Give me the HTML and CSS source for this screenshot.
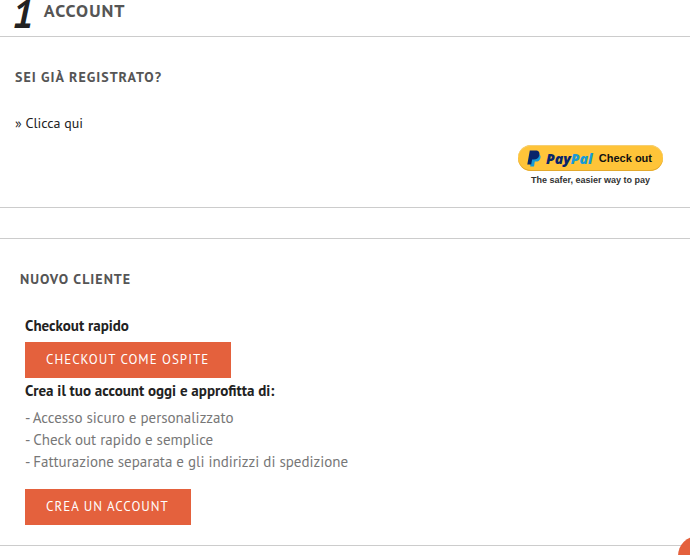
FILE: index.html
```html
<!DOCTYPE html>
<html lang="it">
<head>
<meta charset="utf-8">
<title>Account</title>
<link rel="stylesheet" href="styles.css">
</head>
<body>
<main>
  <header class="step">
    <span class="step-number">1</span>
    <h1 class="step-title">Account</h1>
  </header>

  <section class="panel login">
    <h2 class="panel-title">Sei già registrato?</h2>
    <a class="login-link" href="#">» Clicca qui</a>
    <div class="paypal">
      <button class="paypal-button" type="button" aria-label="PayPal Check out">
        <svg class="paypal-mark" viewBox="0 0 14 17" aria-hidden="true">
          <path fill="#169bd7" d="M4.5 4.5H12.6C13.8 5.6 13.8 7.2 13.2 8.8C12.5 10.8 11 11.6 9 11.6H7.8L7 16.5H3.2Z"/>
          <path fill="#08256b" d="M2.8 .5H8.5C11.7 .5 13 2.5 12.3 5.2C11.6 8.3 9.6 9.4 6.8 9.4H5.1L4.2 14.4H.3Z"/>
        </svg>
        <span class="paypal-name">Pay<span class="paypal-pal">Pal</span></span>
        <span class="paypal-label">Check out</span>
      </button>
      <p class="paypal-note">The safer, easier way to pay</p>
    </div>
  </section>

  <section class="panel customer">
    <h2 class="panel-title">Nuovo cliente</h2>
    <div class="options">
      <h3 class="option-title">Checkout rapido</h3>
      <button class="button" type="button">Checkout come ospite</button>
      <h3 class="option-title">Crea il tuo account oggi e approfitta di:</h3>
      <ul class="benefits">
        <li>- Accesso sicuro e personalizzato</li>
        <li>- Check out rapido e semplice</li>
        <li>- Fatturazione separata e gli indirizzi di spedizione</li>
      </ul>
      <button class="button" type="button">Crea un account</button>
    </div>
  </section>
</main>
<button class="to-top" type="button" aria-label="Torna su"></button>
</body>
</html>
```
FILE: styles.css
```css
* {
  box-sizing: border-box;
}

body {
  margin: 0;
  overflow: hidden;
  background: #fff;
  color: #777;
  font: 15px/22px "PT Sans", "Noto Sans", sans-serif;
}

h1, h2, h3, p, ul {
  margin: 0;
  padding: 0;
}

.step {
  display: flex;
  align-items: flex-end;
  gap: 10px;
  height: 37px;
  padding: 0 12px;
  border-bottom: 1px solid #ccc;
}

.step-number {
  color: #222;
  font-size: 40px;
  font-style: italic;
  font-weight: 700;
  line-height: 46px;
}

.step-title {
  padding-bottom: 13px;
  color: #555;
  font-size: 18px;
  font-weight: 700;
  letter-spacing: 1px;
  line-height: 24px;
  text-transform: uppercase;
}

.panel {
  border-bottom: 1px solid #ccc;
}

.panel-title {
  color: #555;
  font-size: 14px;
  font-weight: 700;
  letter-spacing: 1px;
  line-height: 20px;
  text-transform: uppercase;
}

.login {
  padding: 30px 27px 20px 15px;
}

.login-link {
  display: block;
  width: fit-content;
  margin-top: 26px;
  color: #222;
  font-size: 14px;
  line-height: 20px;
  text-decoration: none;
}

.paypal {
  width: 145px;
  margin: 12px 0 0 auto;
  font-family: "Liberation Sans", Arial, sans-serif;
}

.paypal-button {
  display: flex;
  align-items: center;
  width: 100%;
  height: 26px;
  padding: 0 11px 0 9px;
  border: 0;
  border-radius: 13px;
  background: #ffc439;
  box-shadow: inset 0 -1px #e3a92e, inset 0 1px #f5cf72;
  font-family: inherit;
  font-weight: 700;
  white-space: nowrap;
}

.paypal-mark {
  flex: none;
  width: 14px;
  height: 17px;
}

.paypal-name {
  margin-left: 5px;
  color: #08256b;
  font-family: "Open Sans", sans-serif;
  font-size: 14px;
  font-style: italic;
  font-weight: 800;
}

.paypal-pal {
  color: #169bd7;
}

.paypal-label {
  margin-left: auto;
  color: #111;
  font-size: 11px;
}

.paypal-note {
  color: #333;
  font-size: 9px;
  font-weight: 700;
  line-height: 18px;
  text-align: center;
}

.customer {
  margin-top: 30px;
  padding: 30px 20px 20px;
  border-top: 1px solid #ccc;
}

.login {
  padding-bottom: 18px;
}

.options {
  display: flex;
  flex-direction: column;
  align-items: flex-start;
  padding: 26px 5px 0;
}

.option-title {
  color: #222;
  font-size: 15px;
  font-weight: 700;
  line-height: 22px;
}

.button {
  height: 36px;
  padding: 0 22px 0 21px;
  border: 0;
  background: #e4613d;
  color: #fff;
  font: 500 13px/18px "PT Sans", "Noto Sans", sans-serif;
  letter-spacing: 1px;
  text-transform: uppercase;
}

.option-title + .button {
  margin: 5px 0 2px;
}

.benefits {
  margin: 5px 0 16px;
  list-style: none;
}

.to-top {
  position: fixed;
  right: -28px;
  bottom: -21px;
  width: 40px;
  height: 40px;
  border: 0;
  border-radius: 50%;
  background: #e4613d;
}
```
